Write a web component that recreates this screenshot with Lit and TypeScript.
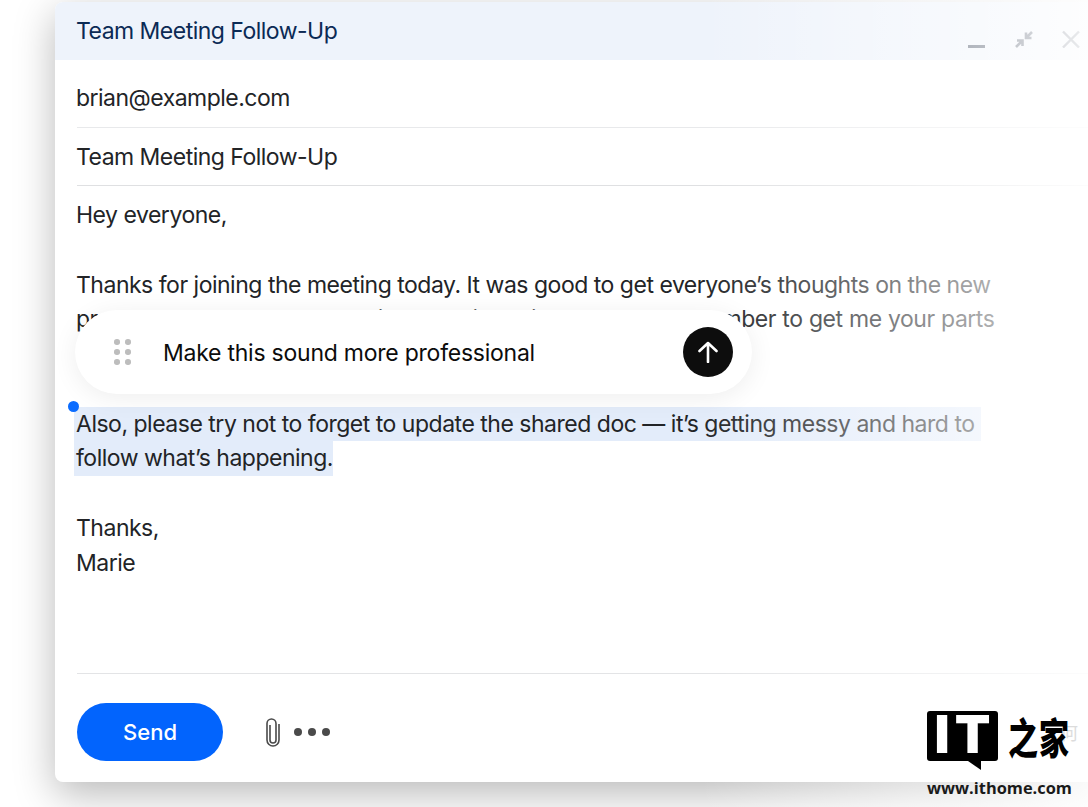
import { LitElement, html, css } from "lit";
import { customElement } from "lit/decorators.js";

@customElement("app-root")
export class AppRoot extends LitElement {
  static styles = css`
    :host { display: block; position: relative; width: 1088px; height: 807px; overflow: hidden; background: #fff; font-family: Inter, "Liberation Sans", sans-serif; color: #222427; }
    .page { padding-left: 55px; height: 807px; box-sizing: border-box; }
    .window { width: 1120px; height: 780px; margin-top: 2px; background: #fff; border-radius: 8px 0 0 8px; box-shadow: 0 12px 40px rgba(0,0,0,.28); display: flex; flex-direction: column; font-size: 23px; letter-spacing: -.49px; font-weight: 440; }
    .header { height: 58px; flex: none; background: #eef3fb; color: #0b2a55; border-radius: 8px 0 0 0; display: flex; align-items: center; padding-left: 21px; box-sizing: border-box; position: relative; }
    .header span, .row span { letter-spacing: -.52px; }
    .controls { position: absolute; left: 913px; top: 28px; display: flex; gap: 29px; }
    .controls svg { display: block; width: 18px; height: 18px; fill: none; stroke: #465063; }
    .content { flex: 1; padding-left: 22px; display: flex; flex-direction: column; min-height: 0; }
    .row { flex: none; border-bottom: 1px solid #e8e9eb; display: flex; align-items: center; box-sizing: border-box; }
    .row span { margin-left: -1px; }
    .row.first { height: 68px; padding-top: 8px; }
    .row.second { height: 58px; border-bottom-color: #dfe0e2; }
    .body { flex: 1; line-height: 34.75px; white-space: nowrap; padding-top: 12px; border-bottom: 1px solid #e3e4e6; min-height: 0; }
    .body > div { margin-left: -1px; }
    .tune { word-spacing: .5px; }
    .blank { height: 34.75px; }
    .body > .sel { width: fit-content; background: #e3ecfa; margin-left: -3px; padding-left: 2px; }
    .body > .sel.long { padding-right: 6px; }
    .footer { height: 108px; flex: none; display: flex; align-items: center; padding-top: 8px; box-sizing: border-box; letter-spacing: 0; }
    .send { width: 146px; height: 58px; border-radius: 29px; border: 0; background: #0264fd; color: #fff; font: 500 22px Inter, sans-serif; }
    .clip { width: 18px; height: 30px; margin-left: 41px; fill: none; stroke: #4a4a4a; stroke-width: 1.6; }
    .dots { display: flex; gap: 6px; margin-left: 12px; }
    .dots i { width: 8px; height: 8px; border-radius: 50%; background: #4a4a4a; }
    .fade { position: absolute; inset: 0; pointer-events: none; background: linear-gradient(to right, rgba(255,255,255,0) 700px, rgba(255,255,255,.65) 1000px, rgba(255,255,255,.9) 1088px); }
    .handle { position: absolute; left: 68px; top: 401px; width: 11px; height: 11px; border-radius: 50%; background: #0a6cff; }
    .popup { position: absolute; left: 75px; top: 310px; width: 677px; height: 84px; border-radius: 42px; background: #fff; box-shadow: 0 4px 26px rgba(0,0,0,.07); display: flex; align-items: center; box-sizing: border-box; padding: 0 19px 0 39px; font-size: 23px; letter-spacing: -.24px; font-weight: 440; color: #0c0c0c; }
    .grip { display: grid; grid-template-columns: 5px 5px; gap: 4.5px 6px; }
    .grip i { width: 5.5px; height: 5.5px; border-radius: 50%; background: #bdbdbd; }
    .popup .prompt { margin-left: 33px; flex: 1; padding-top: 1px; }
    .go { width: 50px; height: 50px; border-radius: 50%; background: #0d0d0d; display: flex; align-items: center; justify-content: center; }
    .go svg { width: 22px; height: 22px; fill: none; stroke: #fff; stroke-width: 2.6; stroke-linecap: round; stroke-linejoin: round; }
    .mark { position: absolute; left: 927px; top: 711px; width: 150px; height: 96px; display: grid; grid-template-columns: 71px 1fr; }
    .bubble { width: 71px; height: 50px; background: #000; border-radius: 3px; position: relative; color: #fff; font: 900 52px/48px Inter, sans-serif; display: flex; justify-content: center; gap: 5px; }
    .bubble::after { content: ""; position: absolute; left: 41px; top: 50px; border-style: solid; border-width: 9px 13px 0 0; border-color: #000 transparent transparent transparent; transform: scaleX(-1); }
    .han { position: relative; }
    .han b { display: block; font: 900 30px/50px "Noto Sans CJK SC", sans-serif; color: #000; padding-left: 10px; white-space: nowrap; letter-spacing: 1px; transform: scaleY(1.4); transform-origin: 0 50%; }
    .ghost { position: absolute; left: 62px; top: 9px; font: 400 18px/24px "Noto Sans CJK SC", sans-serif; color: #dcdcdc; }
    .url { grid-column: 1 / 3; margin-top: 8px; font: 700 16.4px/22px "Open Sans", sans-serif; color: #1a1a1a; white-space: nowrap; }
  `;

  render() {
    return html`
      <div class="page">
        <div class="window">
          <div class="header">
            <span>Team Meeting Follow-Up</span>
            <div class="controls">
              <svg viewBox="0 0 18 18" stroke-width="3"><path d="M0 16.5h17" /></svg>
              <svg viewBox="0 0 18 18" stroke-width="2.6"><path d="M17 2l-6 6M11 2.500V8h5.500M1 17l6-6M2 10.500h5.500V16" /></svg>
              <svg viewBox="0 0 18 18" stroke-width="2.4"><path d="M1 1.500l16 16M17 1.500l-16 16" /></svg>
            </div>
          </div>
          <div class="content">
            <div class="row first"><span>brian@example.com</span></div>
            <div class="row second"><span>Team Meeting Follow-Up</span></div>
            <div class="body">
              <div>Hey everyone,</div>
              <div class="blank"></div>
              <div>Thanks for joining the meeting today. It was good to get everyone’s thoughts on the new</div>
              <div class="tune">product launch. Let’s keep things moving this week, and remember to get me your parts</div>
              <div>of the deck by Friday.</div>
              <div class="blank"></div>
              <div class="sel long">Also, please try not to forget to update the shared doc — it’s getting messy and hard to</div>
              <div class="sel">follow what’s happening.</div>
              <div class="blank"></div>
              <div>Thanks,</div>
              <div>Marie</div>
            </div>
            <div class="footer">
              <button class="send">Send</button>
              <svg class="clip" viewBox="0 0 18 30"><path d="M6 8v15a3 3 0 0 0 6 0V6.500a4.500 4.500 0 0 0-9 0V23a6 6 0 0 0 12 0V7" /></svg>
              <div class="dots"><i></i><i></i><i></i></div>
            </div>
          </div>
        </div>
      </div>
      <div class="fade"></div>
      <div class="handle"></div>
      <div class="popup">
        <div class="grip"><i></i><i></i><i></i><i></i><i></i><i></i></div>
        <div class="prompt">Make this sound more professional</div>
        <div class="go"><svg viewBox="0 0 22 22"><path d="M11 21V2M2.500 10 11 2l8.500 8" /></svg></div>
      </div>
      <div class="mark">
        <div class="bubble"><span>I</span><span>T</span></div>
        <div class="han"><span class="ghost">何</span><b>之家</b></div>
        <div class="url">www.ithome.com</div>
      </div>
    `;
  }
}
